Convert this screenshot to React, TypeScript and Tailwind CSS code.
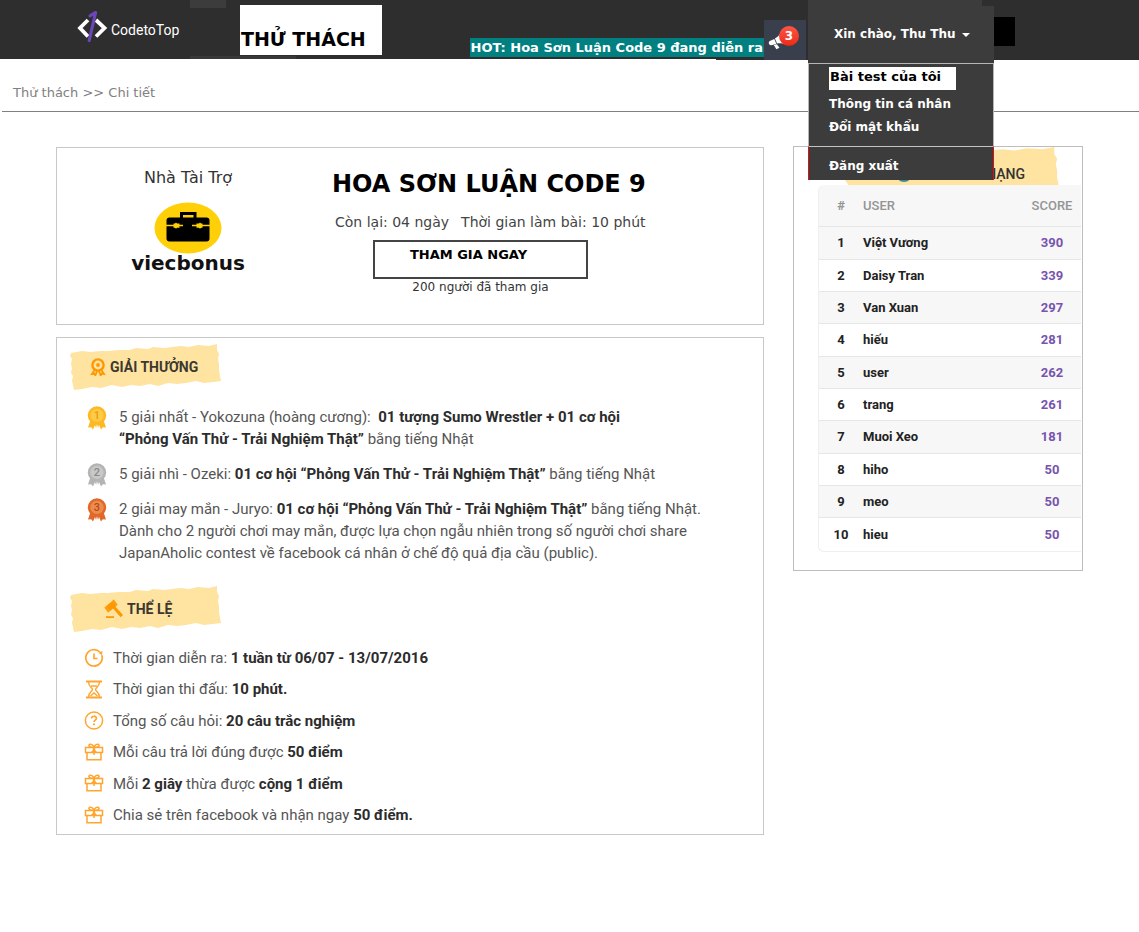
import React from "react";

const ranking = [
  { user: "Việt Vương", score: 390 },
  { user: "Daisy Tran", score: 339 },
  { user: "Van Xuan", score: 297 },
  { user: "hiếu", score: 281 },
  { user: "user", score: 262 },
  { user: "trang", score: 261 },
  { user: "Muoi Xeo", score: 181 },
  { user: "hiho", score: 50 },
  { user: "meo", score: 50 },
  { user: "hieu", score: 50 },
];

function LogoMark() {
  return (
    <svg viewBox="0 0 32 34" className="h-[34px] w-8" aria-hidden="true">
      <path d="M12 11 4 19l8 8.500" fill="none" stroke="#fff" strokeWidth="3.8" />
      <path d="M20 11 28.500 19 20 27.500" fill="none" stroke="#fff" strokeWidth="3.8" />
      <path d="M13.2 31.500 19.6 3.500 14 6.800" fill="none" stroke="#6b46b8" strokeWidth="3.2" strokeLinecap="round" strokeLinejoin="round" />
    </svg>
  );
}

function Megaphone() {
  return (
    <svg viewBox="0 0 18 18" className="h-5 w-5" fill="#fff" aria-hidden="true">
      <path d="M12 1.2 17 13.6C13.5 11.8 10.5 11.6 8.2 12.2L6.2 7.6C8.6 6.5 10.8 4.6 12 1.2Z" />
      <path d="M5.6 8 7.6 12.5 3 13.8C1 14.2-.2 11 1.6 9.8Z" />
      <path d="M5.2 13.6 8 12.8 10.3 16 7.6 17.4Z" />
    </svg>
  );
}

function Tape({ className, children }: { className: string; children: React.ReactNode }) {
  return (
    <div className={`relative flex items-center ${className}`}>
      <svg viewBox="0 0 151 46" preserveAspectRatio="none" className="absolute inset-0 h-full w-full" aria-hidden="true">
        <path
          fill="#ffe3a1"
          d="M1 9 12 7 20 8 31 7 38 7 49 6 60 6 66 4 78 5 83 3 95 4 102 3 111 2 119 3 128 1 139 2 147 0 147 6 149 10 148 15 149 20 149 26 150 32 151 37 143 38 134 39 126 37 116 39 107 40 98 39 88 42 80 40 70 42 61 41 52 43 42 41 31 44 22 43 12 45 4 46 3 41 2 37 3 32 1 29 2 24 1 20 2 15 0 12Z"
        />
      </svg>
      <div className="relative flex items-center gap-1">{children}</div>
    </div>
  );
}

function RosetteIcon() {
  return (
    <svg viewBox="0 0 16 18" className="h-[18px] w-4" fill="none" stroke="#ff9800" aria-hidden="true">
      <circle cx="8" cy="7" r="5.600" strokeWidth="2.4" />
      <circle cx="8" cy="7" r="1.900" fill="#ff9800" stroke="none" />
      <path d="M4.600 12 2 16l2.200-.4 1.200 1.800L7 13M11.400 12 14 16l-2.200-.4-1.200 1.800L9 13" strokeWidth="1.8" />
    </svg>
  );
}

function GavelIcon() {
  return (
    <svg viewBox="0 0 20 20" className="h-5 w-5" fill="#ff9800" aria-hidden="true">
      <path d="M2.600 7.600 9.600 1.800 13.400 7 6.400 12.400Z" />
      <path d="M1.400 8.400 2.600 7.400 6.400 12.400 5 13.400ZM9.400 1.400 10.800.4 14.600 5.800 13.200 7Z" />
      <path d="M9.400 8.800 11.600 6.800 20 16 17.600 18.200Z" />
      <path d="M3 17.200h8v1.800H3Z" />
    </svg>
  );
}

function Medal({ place, color, ring, ink }: { place: string; color: string; ring: string; ink: string }) {
  return (
    <svg viewBox="0 0 20 24" className="h-6 w-5 shrink-0" aria-hidden="true">
      <path d="M3.500 14 1 21.600l3.200-.4L6 23.600 8 19l1 3 1-4 1 4 1-3 2 4.600 1.800-2.400 3.200.4L16.500 14Z" fill={color} />
      <circle cx="10" cy="9.400" r="9.200" fill={color} />
      <circle cx="10" cy="9.400" r="6.600" fill={ring} />
      <text x="10" y="13.300" textAnchor="middle" fill={ink} className="font-['Roboto',sans-serif] text-[11px] font-medium">
        {place}
      </text>
    </svg>
  );
}

const lineIcon = "h-5 w-5 shrink-0";

function ClockIcon() {
  return (
    <svg viewBox="0 0 20 20" className={lineIcon} fill="none" stroke="#ffa52e" strokeWidth="1.7" aria-hidden="true">
      <path d="M17.800 7.200A8.200 8.200 0 1 1 15.800 4" />
      <path d="M10 5.500V10.500H13.500" />
      <path d="M14.500 4.800 18.500 3 18 7.200Z" fill="#ffa52e" stroke="none" />
    </svg>
  );
}

function HourglassIcon() {
  return (
    <svg viewBox="0 0 20 20" className={lineIcon} fill="none" stroke="#ffa52e" strokeWidth="1.4" aria-hidden="true">
      <path d="M2 1.500H18M2 17.500H18" strokeWidth="1.8" />
      <path d="M4.500 2C4.500 6.500 8.500 8 8.500 9.500S4.500 12.500 4.500 17M15.500 2C15.500 6.500 11.500 8 11.500 9.500S15.500 12.500 15.500 17" />
      <path d="M7 6H13M6.500 16 10 13 13.500 16" />
    </svg>
  );
}

function QuestionIcon() {
  return (
    <svg viewBox="0 0 20 20" className={lineIcon} fill="none" stroke="#ffa52e" strokeWidth="1.5" aria-hidden="true">
      <circle cx="10" cy="9.500" r="8.600" />
      <path d="M7.600 7.500C7.600 4.500 12.400 4.500 12.400 7.300 12.400 9.100 10 9.100 10 11" strokeWidth="1.7" />
      <circle cx="10" cy="13.300" r="1.100" fill="#ffa52e" stroke="none" />
    </svg>
  );
}

function GiftIcon() {
  return (
    <svg viewBox="0 0 20 20" className={lineIcon} fill="none" stroke="#ffa52e" strokeWidth="1.5" aria-hidden="true">
      <path d="M1.500 4.500H18.500V9.500H1.500ZM3 9.500V16.800H17V9.500" />
      <path d="M10 4.500C7.500 4.500 4.500 3.800 5 2 5.800.4 9.200 1.200 10 4.500ZM10 4.500C12.500 4.500 15.500 3.800 15 2 14.200.4 10.800 1.200 10 4.500Z" />
      <path d="M7.500 9.500C9 8.500 10 7 10 4.500 10 7 11 8.500 12.500 9.500M10 6V12" />
    </svg>
  );
}

function SponsorLogo() {
  return (
    <svg viewBox="0 0 68 52" className="h-[52px] w-[68px]" aria-hidden="true">
      <ellipse cx="34" cy="26" rx="33.500" ry="25.500" fill="#ffd008" />
      <path d="M26 16V10H42.500V16H39.500V13H29V16Z" fill="#000" />
      <rect x="12.500" y="15.500" width="43" height="24" rx="3" fill="#000" />
      <path d="M12 22.700H19.500V21.500H21L22 20.500 23 21.500H25.500V22.700H29V24.300H25.500V25.700H23L22 26.800 21 25.700H19.500V24.300H12ZM56 22.700H48.500V21.500H47L46 20.500 45 21.500H42.500V22.700H38V24.300H42.500V25.700H45L46 26.800 47 25.700H48.500V24.300H56Z" fill="#ffd008" />
    </svg>
  );
}

function GlobeIcon() {
  return (
    <svg viewBox="0 0 16 16" className="h-4 w-4" aria-hidden="true">
      <circle cx="8" cy="8" r="8" fill="#3b8a94" />
      <path d="M3 6C6 2 9 5 12 4M5 12C8 9 10 12 13 10" stroke="#9fd3b5" strokeWidth="1.5" fill="none" />
    </svg>
  );
}

function Header() {
  return (
    <header className="relative flex h-[60px] bg-[#2e2e2e]">
      <div className="absolute bottom-0 left-0 h-px w-[716px] bg-white" />
      <a href="#" className="flex w-[190px] items-start pl-[76px] pt-[9px] font-['Roboto',sans-serif] text-[14px] text-white">
        <LogoMark />
        <span className="ml-[3px] leading-[42px]">CodetoTop</span>
      </a>
      <div className="flex w-[50px] flex-col items-start justify-between">
        <div className="h-2 w-9 bg-[#3c3c3c]" />
      </div>
      <div className="absolute bottom-px left-[190px] h-[3px] w-[106px] bg-[#383838]" />
      <h1 className="relative mb-[5px] mt-[5px] flex w-[142px] items-end whitespace-nowrap bg-white pb-1 pl-px text-[19px] font-bold leading-6 text-black">
        THỬ THÁCH
      </h1>
      <div className="flex flex-1 items-end justify-end pb-[3px]">
        <a href="#" className="h-[19px] whitespace-nowrap bg-[#008080] px-px text-[13px] font-bold leading-[19px] text-white">
          HOT: Hoa Sơn Luận Code 9 đang diễn ra
        </a>
      </div>
      <button type="button" aria-label="3" className="relative mr-0.5 mt-5 flex h-10 w-[42px] items-center bg-[#3a3f4d] pl-1">
        <Megaphone />
        <span className="absolute right-[7px] top-1.5 flex h-5 w-5 items-center justify-center rounded-full bg-linear-to-b from-[#fb5444] to-[#ee2710] text-[12px] font-bold text-white">
          3
        </span>
      </button>
      <UserMenu />
      <div className="mr-[124px] mt-[17px] h-[29px] w-[21px] bg-black" />
    </header>
  );
}

function UserMenu() {
  return (
    <div className="relative z-10 w-[186px] text-[12px] font-bold text-white">
      <div className="mr-3 h-1.5 bg-[#3c3c3c]" />
      <button type="button" className="flex h-[57px] w-full items-center gap-1.5 whitespace-nowrap bg-[#3c3c3c] pb-0.5 pl-[26px] font-bold">
        <span>Xin chào, Thu Thu</span>
        <svg viewBox="0 0 8 4" className="mt-0.5 h-1 w-2" fill="#fff" aria-hidden="true">
          <path d="M0 0H8L4 4Z" />
        </svg>
      </button>
      <nav className="absolute left-0 right-0 top-[63px] flex flex-col border-x border-t border-[#b5b5b5] bg-[#3c3c3c] pt-[3px]">
        <a href="#" className="ml-5 h-[23px] w-[127px] bg-white pl-px text-[13px] leading-5 text-black">
          Bài test của tôi
        </a>
        <a href="#" className="mt-[3px] pl-5 leading-[23px]">Thông tin cá nhân</a>
        <a href="#" className="pb-[7px] pl-5 leading-[23px]">Đổi mật khẩu</a>
        <a href="#" className="-mx-px h-[34px] border-x border-t border-x-[#e01010] border-t-[#c4c4c4] bg-[#3c3c3c] pl-5 leading-[38px]">
          Đăng xuất
        </a>
      </nav>
    </div>
  );
}

function ContestCard() {
  return (
    <section className="flex h-[178px] border border-[#c8c8c8]">
      <div className="flex w-[262px] shrink-0 flex-col items-center pt-[18px]">
        <p className="text-[16px] leading-6 text-[#333]">Nhà Tài Trợ</p>
        <div className="mt-3">
          <SponsorLogo />
        </div>
        <p className="text-[20px] font-bold leading-[18px] text-[#111]">viecbonus</p>
      </div>
      <div className="flex flex-col items-start whitespace-nowrap pl-[13px] pt-5">
        <h2 className="text-[24px] font-bold leading-8 text-black">HOA SƠN LUẬN CODE 9</h2>
        <div className="mt-3 flex gap-3 pl-[3px] text-[14px] leading-5 text-[#444]">
          <span>Còn lại: 04 ngày</span>
          <span>Thời gian làm bài: 10 phút</span>
        </div>
        <div className="ml-[41px] mt-2 w-[215px] text-center">
          <button type="button" className="flex h-[39px] w-full justify-center border-2 border-[#444] pr-6 pt-[3px] text-[13px] font-bold leading-5 text-black">
            THAM GIA NGAY
          </button>
          <p className="text-[12px] leading-4 text-[#333]">200 người đã tham gia</p>
        </div>
      </div>
    </section>
  );
}

function DetailsCard() {
  const rules: { icon: React.ReactNode; text: React.ReactNode }[] = [
    { icon: <ClockIcon />, text: <>Thời gian diễn ra: <b>1 tuần từ 06/07 - 13/07/2016</b></> },
    { icon: <HourglassIcon />, text: <>Thời gian thi đấu: <b>10 phút.</b></> },
    { icon: <QuestionIcon />, text: <>Tổng số câu hỏi: <b>20 câu trắc nghiệm</b></> },
    { icon: <GiftIcon />, text: <>Mỗi câu trả lời đúng được <b>50 điểm</b></> },
    { icon: <GiftIcon />, text: <>Mỗi <b>2 giây</b> thừa được <b>cộng 1 điểm</b></> },
    { icon: <GiftIcon />, text: <>Chia sẻ trên facebook và nhận ngay <b>50 điểm.</b></> },
  ];
  return (
    <section className="mt-3 border border-[#c8c8c8] pb-[3px] pl-[13px] pt-1.5 font-['Roboto',sans-serif] text-[15px] text-[#555] [&_b]:text-[#2c2c2c]">
      <Tape className="h-[46px] w-[151px] pl-5">
        <RosetteIcon />
        <h3 className="text-[14px] font-bold leading-5 text-[#3c3830]">GIẢI THƯỞNG</h3>
      </Tape>
      <ol className="mt-4 flex flex-col gap-[13px] pl-[17px] leading-[22px]">
        <li className="flex items-start gap-3">
          <Medal place="1" color="#fdb924" ring="#ffca45" ink="#e79a10" />
          <p>
            5 giải nhất - Yokozuna (hoàng cương):&nbsp; <b>01 tượng Sumo Wrestler + 01 cơ hội<br />“Phỏng Vấn Thử - Trải Nghiệm Thật”</b> bằng tiếng Nhật
          </p>
        </li>
        <li className="flex h-[22px] items-start gap-3">
          <Medal place="2" color="#b4b4b4" ring="#c8c8c8" ink="#8a8a8a" />
          <p>
            5 giải nhì - Ozeki: <b>01 cơ hội “Phỏng Vấn Thử - Trải Nghiệm Thật”</b> bằng tiếng Nhật
          </p>
        </li>
        <li className="flex items-start gap-3">
          <Medal place="3" color="#e0692a" ring="#ec8d50" ink="#b84a14" />
          <p>
            2 giải may mắn - Juryo: <b>01 cơ hội “Phỏng Vấn Thử - Trải Nghiệm Thật”</b> bằng tiếng Nhật.
            <br />
            Dành cho 2 người chơi may mắn, được lựa chọn ngẫu nhiên trong số người chơi share
            <br />
            JapanAholic contest về facebook cá nhân ở chế độ quả địa cầu (public).
          </p>
        </li>
      </ol>
      <Tape className="mt-[22px] h-[46px] w-[151px] pl-[33px]">
        <GavelIcon />
        <h3 className="text-[14px] font-bold leading-5 text-[#3c3830]">THỂ LỆ</h3>
      </Tape>
      <ul className="mt-[10px] pl-[14px]">
        {rules.map((rule, i) => (
          <li key={i} className="flex h-8 items-center gap-[9px] even:h-[31px]">
            {rule.icon}
            <p>{rule.text}</p>
          </li>
        ))}
      </ul>
    </section>
  );
}

function RankingCard() {
  return (
    <aside className="w-[290px] shrink-0 border border-[#bdbdbd] pb-[18px] pl-6 pr-px font-['Roboto',sans-serif]">
      <div className="h-[38px] overflow-hidden pl-[26px]">
        <Tape className="h-[54px] w-[216px] pl-[52px]">
          <GlobeIcon />
          <h3 className="whitespace-nowrap text-[14px] font-medium leading-5 text-[#333]">BẢNG XẾP HẠNG</h3>
        </Tape>
      </div>
      <table className="w-full border-separate border-spacing-0 overflow-hidden rounded-l-md border-b border-l border-[#efefef] text-[13px] font-bold text-[#222]">
        <thead>
          <tr className="h-[42px] bg-[#f7f7f7] text-[#949494]">
            <th scope="col" className="w-11 border-b border-[#e6e6e6] font-bold">#</th>
            <th scope="col" className="border-b border-[#e6e6e6] text-left font-medium">USER</th>
            <th scope="col" className="w-[58px] border-b border-[#e6e6e6] font-medium">SCORE</th>
          </tr>
        </thead>
        <tbody>
          {ranking.map((row, i) => (
            <tr key={row.user} className="group h-8 odd:bg-[#f7f7f7] nth-[3n+1]:h-[33px] last:h-8">
              <td className="border-b border-[#e6e6e6] text-center group-last:border-b-0">{i + 1}</td>
              <td className="border-b border-[#e6e6e6] group-last:border-b-0">{row.user}</td>
              <td className="border-b border-[#e6e6e6] text-center text-[#7754ae] group-last:border-b-0">{row.score}</td>
            </tr>
          ))}
        </tbody>
      </table>
    </aside>
  );
}

export default function App() {
  return (
    <div className="min-h-screen bg-white font-['DejaVu_Sans',sans-serif]">
      <Header />
      <nav className="ml-0.5 border-b border-[#808080] pb-[7px] pl-[11px] pt-[22px] text-[13px] leading-[22px] text-[#808080]">
        <a href="#">Thử thách</a> &gt;&gt; <span>Chi tiết</span>
      </nav>
      <main className="flex items-start gap-[29px] px-14 pt-[34px]">
        <div className="min-w-0 flex-1 pt-px">
          <ContestCard />
          <DetailsCard />
        </div>
        <RankingCard />
      </main>
    </div>
  );
}
